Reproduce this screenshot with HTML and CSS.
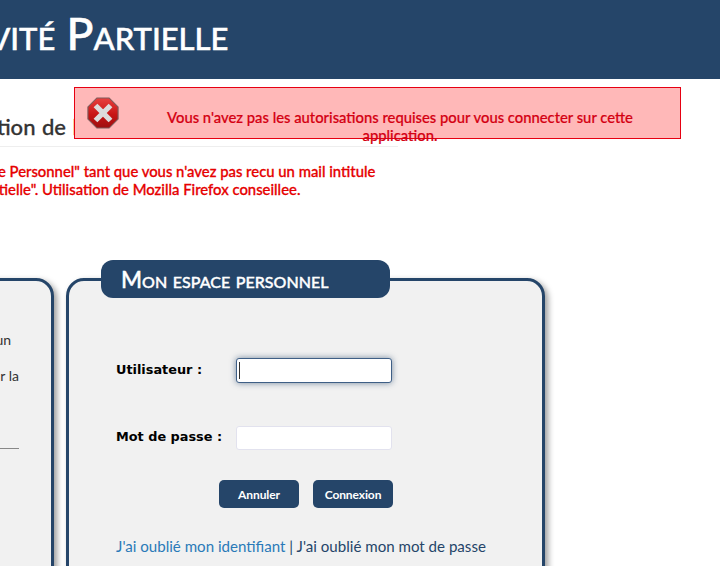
FILE: index.html
```html
<!DOCTYPE html>
<html lang="fr">
<head>
<meta charset="utf-8">
<title>Activité Partielle</title>
<link rel="stylesheet" href="styles.css">
</head>
<body>
<div class="page">
  <header class="banner"><h1 class="banner-title">Activité Partielle</h1></header>
  <h2 class="heading">Identification de l'utilisateur</h2>
  <div class="notice">
    <p>Ne pas utiliser "Mon Espace Personnel" tant que vous n'avez pas recu un mail intitule</p>
    <p>"Activite Partielle". Utilisation de Mozilla Firefox conseillee.</p>
  </div>
  <div class="cards">
    <section class="card card-side">
      <p class="side-line">un</p>
      <p class="side-line">r la</p>
      <hr class="side-rule">
    </section>
    <section class="card card-main">
      <div class="tab">Mon espace personnel</div>
      <form class="login">
        <label class="field-label field-label-first" for="user">Utilisateur :</label>
        <input class="field field-focus" id="user" type="text">
        <label class="field-label" for="pass">Mot de passe :</label>
        <input class="field" id="pass" type="password">
      </form>
      <div class="actions">
        <button class="btn" type="button">Annuler</button>
        <button class="btn" type="button">Connexion</button>
      </div>
      <p class="links"><a class="link-blue" href="#">J'ai oublié mon identifiant</a> <span class="sep">|</span> <a class="link-dark" href="#">J'ai oublié mon mot de passe</a></p>
    </section>
  </div>
</div>
<div class="alert">
  <svg class="alert-icon" viewBox="0 0 34 34" width="32" height="32" aria-hidden="true">
    <defs>
      <linearGradient id="red" x1="0" y1="0" x2="0" y2="1">
        <stop offset="0" stop-color="#e8413f"/>
        <stop offset="0.55" stop-color="#c81414"/>
        <stop offset="1" stop-color="#9c0f10"/>
      </linearGradient>
    </defs>
    <polygon points="10.5,1 23.5,1 33,10.5 33,23.5 23.5,33 10.5,33 1,23.5 1,10.5" fill="url(#red)" stroke="#7d5a5a" stroke-width="1.2"/>
    <path d="M11 11 L23 23 M23 11 L11 23" stroke="#dcdcdc" stroke-width="5.6" stroke-linecap="square" fill="none"/>
  </svg>
  <p class="alert-text">Vous n'avez pas les autorisations requises pour vous connecter sur cette application.</p>
</div>
</body>
</html>
```
FILE: styles.css
```css
html, body {
  margin: 0;
  height: 566px;
  overflow: hidden;
  background: #fff;
}
body {
  position: relative;
  font-family: "Lato", "Liberation Sans", sans-serif;
  color: #333;
}
.page {
  margin-left: -300px;
  width: 1020px;
}
.banner {
  height: 79px;
  background: #254569;
  box-sizing: border-box;
  padding: 6px 0 0 211px;
}
.banner-title {
  margin: 0;
  font-family: "Lato", sans-serif;
  font-variant: small-caps;
  font-weight: 500;
  font-size: 44.5px;
  line-height: 54px;
  color: #fff;
  white-space: nowrap;
  -webkit-text-stroke: 0.5px #fff;
}
.heading {
  margin: 0;
  width: 698px;
  box-sizing: border-box;
  height: 68px;
  padding: 33px 0 0 207px;
  font-size: 22px;
  line-height: 30px;
  font-weight: 500;
  word-spacing: 1px;
  color: #333;
  border-bottom: 1px solid #eee;
  white-space: nowrap;
  -webkit-text-stroke: 0.3px #333;
}
.notice {
  margin-top: 15px;
  height: 116px;
  padding-left: 124px;
  color: #e60000;
  font-size: 14.85px;
  font-weight: 500;
  line-height: 18px;
  -webkit-text-stroke: 0.3px #e60000;
}
.notice p {
  margin: 0;
  white-space: nowrap;
}
.notice p + p {
  padding-left: 94px;
}
.cards {
  display: flex;
  gap: 12px;
  align-items: stretch;
}
.card {
  box-sizing: border-box;
  height: 320px;
  background: #f1f1f1;
  border: 3px solid #254569;
  border-radius: 18px;
  box-shadow: 3px 3px 6px rgba(0, 0, 0, 0.4);
}
.card-side {
  width: 354px;
  padding: 50px 32px 0 0;
  font-size: 14px;
  text-align: right;
}
.side-line {
  margin: 0 8px 19px 0;
  line-height: 17px;
}
.side-line + .side-line {
  margin-right: 0;
}
.side-rule {
  margin: 64px 0 0;
  border: 0;
  border-top: 1px solid #888;
}
.card-main {
  width: 479px;
  padding-left: 47px;
}
.tab {
  box-sizing: border-box;
  width: 289px;
  height: 38px;
  margin: -21px 0 60px -15px;
  padding-left: 20px;
  background: #254569;
  border-radius: 12px;
  color: #fff;
  font-variant: small-caps;
  font-weight: 500;
  font-size: 22.6px;
  line-height: 40px;
  -webkit-text-stroke: 0.4px #fff;
}
.login {
  display: grid;
  grid-template-columns: 120px 156px;
  row-gap: 43px;
  align-items: center;
}
.field-label {
  font-family: "DejaVu Sans", sans-serif;
  font-weight: 700;
  font-size: 12.85px;
  color: #000;
  margin-top: -4px;
}
.field-label-first {
  margin-top: -2px;
}
.field {
  box-sizing: border-box;
  width: 156px;
  height: 24px;
  margin: 0;
  background: #fff;
  border: 1px solid #e2e2ee;
  border-radius: 3px;
  padding: 0 3px;
}
.field-focus {
  height: 25px;
  border-color: #3f5f86;
  box-shadow: 0 0 6px rgba(37, 69, 105, 0.6);
  background: linear-gradient(#333, #333) 2px 3px / 1px 17px no-repeat, #fff;
}
.actions {
  display: flex;
  justify-content: flex-end;
  gap: 14px;
  width: 277px;
  margin-top: 30px;
}
.btn {
  width: 80px;
  height: 28px;
  border: 0;
  border-radius: 5px;
  background: #254569;
  color: #fff;
  font-family: "Lato", sans-serif;
  font-weight: 700;
  font-size: 12px;
  padding: 0;
  letter-spacing: -0.1px;
}
.links {
  margin: 29px 0 0;
  font-size: 15.1px;
  line-height: 18px;
  white-space: nowrap;
}
.link-blue { color: #2a7ab8; text-decoration: none; }
.link-dark { color: #254569; text-decoration: none; }
.sep { color: #254569; }
.alert {
  position: absolute;
  left: 74px;
  top: 87px;
  box-sizing: border-box;
  width: 607px;
  height: 52px;
  display: flex;
  align-items: flex-start;
  background: #ffb8b8;
  border: 1px solid #e60012;
}
.alert-icon {
  flex: none;
  margin: 9px 0 0 12px;
}
.alert-text {
  margin: 20px 0 0 41px;
  width: 480px;
  text-align: center;
  color: #d40012;
  font-size: 14.8px;
  font-weight: 500;
  line-height: 18px;
  -webkit-text-stroke: 0.2px #d40012;
}
```
